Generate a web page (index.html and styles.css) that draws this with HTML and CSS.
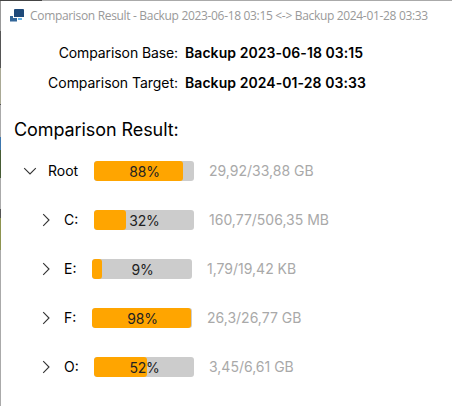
FILE: index.html
```
<!DOCTYPE html>
<html lang="en">
<head>
<meta charset="utf-8">
<title>Comparison Result</title>
<link rel="stylesheet" href="styles.css">
</head>
<body>
<div class="window">
  <header class="titlebar">
    <svg class="app-icon" width="14" height="14" viewBox="0 0 14 14"><path fill="#336699" d="M0 7h3v2h4v3.500H0z"/><path fill="#69b5e8" d="M8 9h4v2H8z"/><path fill="#1f4a7a" d="M4.500 0H13.500l.5.500V8H4V.5z"/></svg>
    <span class="title">Comparison Result - Backup 2023-06-18 03:15 &lt;-&gt; Backup 2024-01-28 03:33</span>
  </header>
  <main>
    <dl class="summary">
      <dt class="base">Comparison Base:</dt><dd>Backup 2023-06-18 03:15</dd>
      <dt>Comparison Target:</dt><dd>Backup 2024-01-28 03:33</dd>
    </dl>
    <h1>Comparison Result:</h1>
    <div class="tree">
      <div class="row root">
        <svg class="chevron" width="14" height="14" viewBox="0 0 14 14"><path d="M1.200 4.200 7 10l5.800-5.800"/></svg>
        <span class="name">Root</span>
        <div class="bar"><div class="fill" style="width:89%"></div><span class="percent">88%</span></div>
        <span class="size">29,92/33,88 GB</span>
      </div>
      <div class="row child">
        <svg class="chevron" width="14" height="14" viewBox="0 0 14 14"><path d="M4.200 1.200 10 7 4.200 12.800"/></svg>
        <span class="name">C:</span>
        <div class="bar"><div class="fill" style="width:32%"></div><span class="percent">32%</span></div>
        <span class="size">160,77/506,35 MB</span>
      </div>
      <div class="row child narrow">
        <svg class="chevron" width="14" height="14" viewBox="0 0 14 14"><path d="M4.200 1.200 10 7 4.200 12.800"/></svg>
        <span class="name">E:</span>
        <div class="bar"><div class="fill" style="width:10%"></div><span class="percent">9%</span></div>
        <span class="size">1,79/19,42 KB</span>
      </div>
      <div class="row child narrow">
        <svg class="chevron" width="14" height="14" viewBox="0 0 14 14"><path d="M4.200 1.200 10 7 4.200 12.800"/></svg>
        <span class="name">F:</span>
        <div class="bar"><div class="fill" style="width:99%"></div><span class="percent">98%</span></div>
        <span class="size">26,3/26,77 GB</span>
      </div>
      <div class="row child">
        <svg class="chevron" width="14" height="14" viewBox="0 0 14 14"><path d="M4.200 1.200 10 7 4.200 12.800"/></svg>
        <span class="name">O:</span>
        <div class="bar"><div class="fill" style="width:53%"></div><span class="percent">52%</span></div>
        <span class="size">3,45/6,61 GB</span>
      </div>
    </div>
  </main>
</div>
</body>
</html>
```
FILE: styles.css
```
* { box-sizing: border-box; }

body {
  margin: 0;
  height: 406px;
  overflow: hidden;
  padding: 1px 0 0 1px;
  font: 14px/20px Inter, sans-serif;
  color: #000;
  background:
    linear-gradient(90deg, #444 0 42px, #aaa 42px) 0 0 / 100% 1px no-repeat,
    linear-gradient(#999 0 31px, #555 31px 68px, #aaa995 68px 104px, #555 104px 105px, #aaa 105px 137px, #3c76ad 137px 150px, #465c35 150px 178px, #aaa 178px 209px, #555 209px 218px, #8e9450 218px 250px, #aaa 250px);
}

.window {
  height: 405px;
  background: #fff;
}

.titlebar {
  display: flex;
  align-items: center;
  height: 30px;
  padding-left: 9px;
}

.app-icon { flex: none; }

.title {
  margin-left: 6px;
  font: 12px/16px "Open Sans", sans-serif;
  letter-spacing: -0.325px;
  color: #999;
  white-space: nowrap;
}

.summary {
  display: grid;
  grid-template-columns: 177px 1fr;
  column-gap: 7px;
  row-gap: 10px;
  margin: 12px 0 0;
  letter-spacing: -0.04px;
}

.summary dt { text-align: right; }
.summary .base { letter-spacing: -0.1px; }

.summary dd {
  margin: 0;
  font-weight: 600;
  letter-spacing: 0.06px;
}

h1 {
  margin: 24px 0 0 13px;
  font-size: 18px;
  line-height: 26px;
  font-weight: 400;
  letter-spacing: -0.08px;
}

.tree { margin-top: 18px; }

.row {
  display: flex;
  align-items: center;
  height: 20px;
  margin-bottom: 29px;
  white-space: nowrap;
}

.root { padding-left: 22px; }
.child { padding-left: 38px; }

.chevron {
  flex: none;
  fill: none;
  stroke: #333;
  stroke-width: 1.1;
}

.name {
  flex: none;
  width: 46px;
  margin-left: 11px;
}

.child .name { width: 30px; }
.narrow .name { width: 28px; }

.bar {
  position: relative;
  flex: none;
  width: 100px;
  height: 20px;
  border-radius: 3px;
  overflow: hidden;
  background: #ccc;
}

.fill {
  height: 100%;
  border-radius: 3px;
  background: #ffa500;
}

.percent {
  position: absolute;
  inset: 1px 0 0 1px;
  text-align: center;
  letter-spacing: -0.2px;
  color: #222;
}

.size {
  margin-left: 15px;
  color: #a9a9a9;
}
```
